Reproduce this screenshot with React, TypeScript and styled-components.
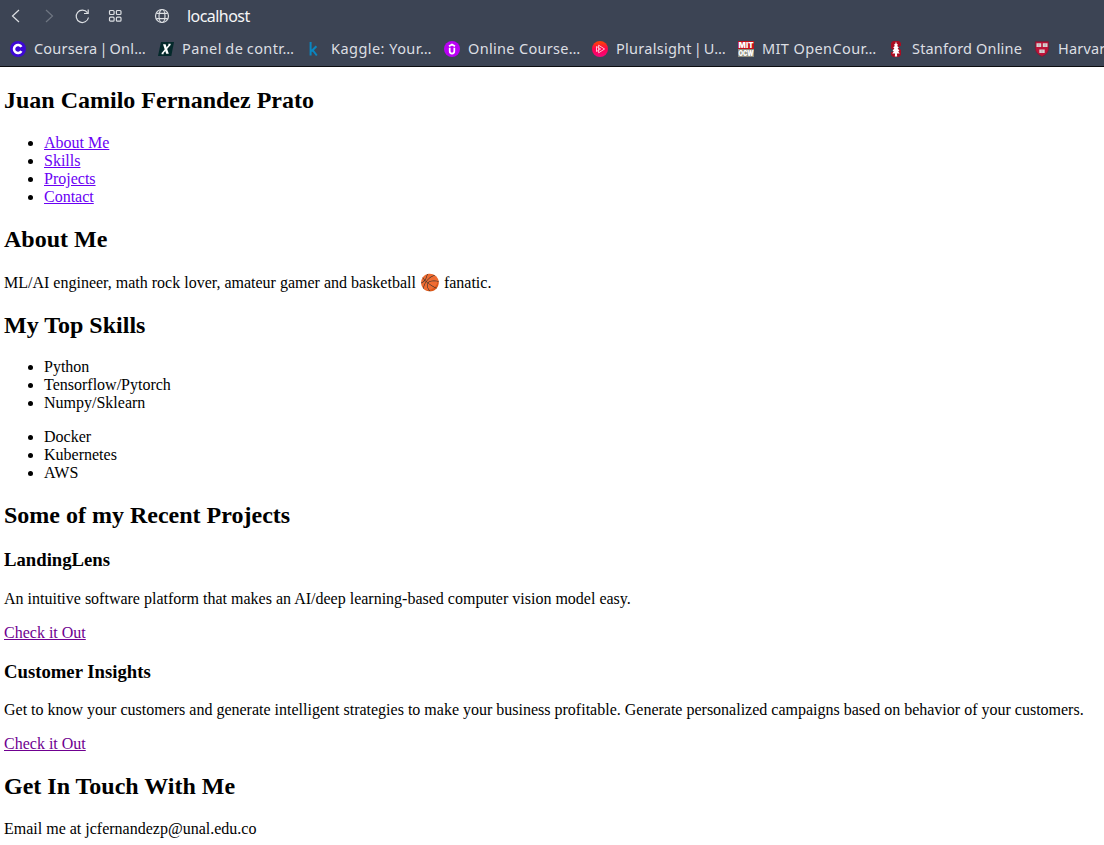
import React from 'react';
import styled, { createGlobalStyle } from 'styled-components';

const GlobalStyle = createGlobalStyle`
  body { margin: 0; background: #fff; color: #000; font-family: "Liberation Serif", "Times New Roman", serif; font-size: 16px; overflow: hidden; }
`;

const Chrome = styled.header`
  box-sizing: border-box;
  height: 67px;
  background: #3c4454;
  border-bottom: 1px solid #0c0d10;
  font-family: "Noto Sans", sans-serif;
  overflow: hidden;
`;
const Toolbar = styled.div`
  height: 32px;
  display: flex;
  align-items: center;
  padding-left: 8px;
`;
const ToolIcon = styled.svg<{ $gap: number; $dim?: boolean }>`
  flex: none;
  width: 16px;
  height: 16px;
  margin-right: ${p => p.$gap}px;
  fill: none;
  stroke: ${p => (p.$dim ? '#6f7682' : '#dcdfe3')};
  stroke-width: 1.2;
`;
const Address = styled.span`
  color: #f6f7f8;
  font-size: 16px;
  line-height: 32px;
  letter-spacing: -0.55px;
`;
const Bookmarks = styled.nav`
  height: 34px;
  display: flex;
  align-items: center;
  padding-left: 10px;
`;
const Bookmark = styled.div<{ $width: number }>`
  flex: none;
  width: ${p => p.$width}px;
  display: flex;
  align-items: center;
  gap: 8px;
`;
const Favicon = styled.svg`
  flex: none;
  width: 16px;
  height: 16px;
`;
const Label = styled.span<{ $spacing: number; $words: number }>`
  color: #dcdfe3;
  font-size: 14.5px;
  line-height: 20px;
  padding-bottom: 2px;
  white-space: nowrap;
  letter-spacing: ${p => p.$spacing}px;
  word-spacing: ${p => p.$words}px;
`;

const Page = styled.main`
  display: flow-root;
  padding: 0 4px;
`;
const Title = styled.h2`
  font-size: 24px;
  margin: 19.92px 0;
`;
const Subtitle = styled.h3`
  font-size: 18.72px;
  margin: 18.72px 0;
`;
const List = styled.ul`
  margin: 16px 0;
  padding-left: 40px;
`;
const Text = styled.p`
  margin: 16px 0;
`;
const Link = styled.a<{ $visited?: boolean }>`
  color: ${p => (p.$visited ? '#6f0090' : '#6a00f4')};
  text-decoration: underline;
`;

const icons = {
  coursera: (
    <><circle cx="8" cy="8" r="8" fill="#3d08d4" /><path d="M11.4 10.1A4 4 0 1 1 11.4 5.9" fill="none" stroke="#fff" strokeWidth="2.5" /></>
  ),
  panel: (
    <><path d="M3 1H16L13.3 15H0Z" fill="#04292b" /><path d="M5 3.2H7.6L10.8 12.8H8.2Z" fill="#fff" /><path d="M12.2 3.2L4 12.8M10.4 3.4H12.6M3.6 12.6H5.6" stroke="#fff" strokeWidth="1.5" /></>
  ),
  kaggle: <path d="M3.6 1V14.6M9.4 5.2L4.4 10.3M5.6 9L9.8 14.5" fill="none" stroke="#0a86c0" strokeWidth="2" />,
  udemy: (
    <><circle cx="8" cy="8" r="8" fill="#b900f2" /><path d="M5 5.2L8 3.4L11 5.2M5.7 6.7V10.3Q5.7 12.6 8 12.6T10.3 10.3V6.7" fill="none" stroke="#fff" strokeWidth="1.7" /></>
  ),
  pluralsight: (
    <>
      <defs><linearGradient id="ps" x1="0" y1="0" x2="0" y2="1"><stop offset="0.1" stopColor="#ff3b0d" /><stop offset="0.5" stopColor="#ff004f" /><stop offset="1" stopColor="#f5077c" /></linearGradient></defs>
      <circle cx="8" cy="8" r="8" fill="url(#ps)" />
      <path d="M6.6 4.2L12.6 8L6.6 11.8ZM4.5 5.5V10.5L8.7 8Z" fill="none" stroke="#ffc0d0" strokeWidth="1" />
    </>
  ),
  mit: (
    <>
      <path d="M0 0H16V8H0Z" fill="#c3111c" /><path d="M0 8H16V16H0Z" fill="#8d8c7c" />
      <g fill="#fff" fontFamily="Inter, sans-serif" fontWeight="900" fontSize="8" lengthAdjust="spacingAndGlyphs">
        <text x="0.6" y="7" textLength="14.8" lengthAdjust="spacingAndGlyphs">MIT</text>
        <text x="0.4" y="15" fontSize="7.4" textLength="15.2" lengthAdjust="spacingAndGlyphs">OCW</text>
      </g>
    </>
  ),
  stanford: (
    <><path d="M5 0H11L13 2V5H11V7L13 9V14L11 16H5L3 14V11H5V9L3 7V2Z" fill="#a80d22" /><path d="M8 0.5L8.8 3L10 3.6L9.2 5L10.8 6.4L9.6 7.6L11.4 9.4L10.2 10.4L11.8 12.6L8.9 12.4L9.2 15.5H6.8L7.1 12.4L4.2 12.6L5.8 10.4L4.6 9.4L6.4 7.6L5.2 6.4L6.8 5L6 3.6L7.2 3Z" fill="#fff" /></>
  ),
  harvard: (
    <>
      <path d="M1.4 0.6H14.6V7Q14.6 12.7 8 15.5Q1.4 12.7 1.4 7Z" fill="#bd1238" stroke="#6f2037" strokeWidth="0.7" />
      <path d="M2.5 2.2H7.2V6H2.5ZM8.8 2.2H13.5V6H8.8ZM5.3 8.4H10.7V12H5.3Z" fill="#d8d2d2" />
      <path d="M4.9 2.6V5.5M11.1 2.6V5.5M8 8.8V11.6" stroke="#a88f94" strokeWidth="0.6" />
    </>
  ),
};

const bookmarks: { icon: keyof typeof icons; label: string; width: number; spacing: number; words?: number }[] = [
  { icon: 'coursera', label: 'Coursera | Onl…', width: 148, spacing: 0.2, words: -2 },
  { icon: 'panel', label: 'Panel de contr…', width: 149, spacing: 0.4, words: -0.6 },
  { icon: 'kaggle', label: 'Kaggle: Your…', width: 137, spacing: 0.46 },
  { icon: 'udemy', label: 'Online Course…', width: 148, spacing: 0.32 },
  { icon: 'pluralsight', label: 'Pluralsight | U…', width: 146, spacing: 0.27, words: -2.2 },
  { icon: 'mit', label: 'MIT OpenCour…', width: 150, spacing: 0.4 },
  { icon: 'stanford', label: 'Stanford Online', width: 146, spacing: 0.18 },
  { icon: 'harvard', label: 'Harvard', width: 146, spacing: 0.2 },
];

export default function App() {
  return (
    <>
      <GlobalStyle />
      <Chrome>
        <Toolbar>
          <ToolIcon $gap={17} viewBox="0 0 16 16"><path d="M11 2L4.5 8L11 14" /></ToolIcon>
          <ToolIcon $gap={17} $dim viewBox="0 0 16 16"><path d="M5 2L11.5 8L5 14" /></ToolIcon>
          <ToolIcon $gap={17} viewBox="0 0 16 16"><path d="M13.4 4.6A6.2 6.2 0 1 0 14.5 9.5M14.2 1.5V5.5H10" /></ToolIcon>
          <ToolIcon $gap={31} viewBox="0 0 16 16">
            <rect x="2.5" y="2.5" width="4.6" height="4" rx="1" /><rect x="9.4" y="2.5" width="4.6" height="4" rx="1" />
            <rect x="2.5" y="9.2" width="4.6" height="4" rx="1" /><rect x="9.4" y="9.2" width="4.6" height="4" rx="1" />
          </ToolIcon>
          <ToolIcon $gap={17} viewBox="0 0 16 16">
            <circle cx="8" cy="8" r="6.5" /><ellipse cx="8" cy="8" rx="3" ry="6.5" /><path d="M2.4 5.4H13.6M2.4 10.6H13.6" />
          </ToolIcon>
          <Address>localhost</Address>
        </Toolbar>
        <Bookmarks>
          {bookmarks.map(b => (
            <Bookmark key={b.icon} $width={b.width}>
              <Favicon viewBox="0 0 16 16">{icons[b.icon]}</Favicon>
              <Label $spacing={b.spacing} $words={b.words ?? 0}>{b.label}</Label>
            </Bookmark>
          ))}
        </Bookmarks>
      </Chrome>
      <Page>
        <Title>Juan Camilo Fernandez Prato</Title>
        <List>
          <li><Link href="#about">About Me</Link></li>
          <li><Link href="#skills">Skills</Link></li>
          <li><Link href="#projects">Projects</Link></li>
          <li><Link href="#contact">Contact</Link></li>
        </List>
        <Title id="about">About Me</Title>
        <Text>ML/AI engineer, math rock lover, amateur gamer and basketball 🏀 fanatic.</Text>
        <Title id="skills">My Top Skills</Title>
        <List>
          <li>Python</li>
          <li>Tensorflow/Pytorch</li>
          <li>Numpy/Sklearn</li>
        </List>
        <List>
          <li>Docker</li>
          <li>Kubernetes</li>
          <li>AWS</li>
        </List>
        <Title id="projects">Some of my Recent Projects</Title>
        <Subtitle>LandingLens</Subtitle>
        <Text>An intuitive software platform that makes an AI/deep learning-based computer vision model easy.</Text>
        <Link $visited href="#landinglens">Check it Out</Link>
        <Subtitle>Customer Insights</Subtitle>
        <Text>Get to know your customers and generate intelligent strategies to make your business profitable. Generate personalized campaigns based on behavior of your customers.</Text>
        <Link $visited href="#insights">Check it Out</Link>
        <Title id="contact">Get In Touch With Me</Title>
        <Text>Email me at jcfernandezp@unal.edu.co</Text>
      </Page>
    </>
  );
}
